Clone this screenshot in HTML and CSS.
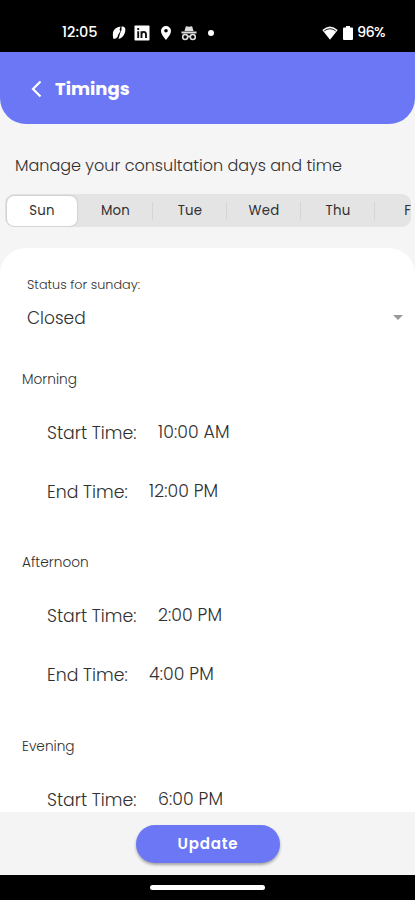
FILE: index.html
```html
<!DOCTYPE html>
<html lang="en">
<head>
<meta charset="utf-8">
<title>Timings</title>
<link rel="stylesheet" href="styles.css">
</head>
<body>
<div class="screen">
  <div class="status">
    <span class="clock">12:05</span>
    <svg class="leaf" width="14" height="16" viewBox="0 0 14 16"><path d="M1.500 14C-.5 7 2 2.500 8.500 1.500L7.500 5 8.500 6 6 10 5.500 12Q4 14 1.500 14ZM6.500 14 8 8.500 9.500 5 9.500 1.500C13.500 1 14 4 12.800 8C11.500 11.500 9.500 13 6.500 14Z" fill="#fff"/></svg>
    <svg class="linkedin" width="16" height="16" viewBox="0 0 16 16"><rect x=".5" y=".5" width="15" height="15" rx=".8" fill="#fff"/><path d="M4.200 6.200V13M4.200 3V5M7.500 13V6.200M7.500 9.500C7.500 6 12 6 12 9.500V13" fill="none" stroke="#111" stroke-width="1.900"/></svg>
    <svg class="pin" width="12" height="16" viewBox="0 0 12 16"><path fill-rule="evenodd" d="M6 1A5 5 0 0 0 1 6C1 9.500 6 15 6 15S11 9.500 11 6A5 5 0 0 0 6 1ZM6 4A1.800 1.800 0 1 1 6 7.600A1.800 1.800 0 0 1 6 4Z" fill="#fff"/></svg>
    <svg class="incognito" width="16" height="16" viewBox="0 0 16 16"><path d="M3.500 6 4.800 1.500Q5.200.8 8 1.700Q10.800.8 11.200 1.500L12.500 6ZM.5 6.500H15.500V8.500H.5Z" fill="#ddd"/><g fill="none" stroke="#ddd" stroke-width="1.600"><circle cx="4.200" cy="12" r="2.500"/><circle cx="11.800" cy="12" r="2.500"/><path d="M6.700 12Q8 10.500 9.300 12"/></g></svg>
    <span class="dot"></span>
    <svg class="wifi" width="16" height="14" viewBox="0 0 16 14"><path d="M.3 4Q8-3 15.700 4L8 13.700Z" fill="#fff"/><path d="M2.200 4.900Q8 .6 13.800 4.900" fill="none" stroke="#000" stroke-width=".9"/></svg>
    <svg class="battery" width="10" height="14" viewBox="0 0 10 14"><path d="M3 0H7V1.500H9Q10 1.500 10 2.500V13Q10 14 9 14H1Q0 14 0 13V2.500Q0 1.500 1 1.500H3Z" fill="#fff"/></svg>
    <span class="percent">96%</span>
  </div>
  <header class="header">
    <svg class="back" width="12" height="18" viewBox="0 0 12 18"><path d="M10.500 1.500 3 9 10.500 16.500" fill="none" stroke="#fff" stroke-width="2.200"/></svg>
    <h1 class="title">Timings</h1>
  </header>
  <p class="intro">Manage your consultation days and time</p>
  <nav class="tabs">
    <span class="tab active">Sun</span><span class="tab">Mon</span><span class="tab">Tue</span><span class="tab">Wed</span><span class="tab">Thu</span><span class="tab">Fri</span>
  </nav>
  <main class="card">
    <div class="label">Status for sunday:</div>
    <div class="select"><span class="value">Closed</span><svg width="10" height="5" viewBox="0 0 10 5"><path d="M0 0H10L5 5Z" fill="#999"/></svg></div>
    <section class="period">
      <h2 class="name">Morning</h2>
      <div class="row"><span class="start">Start Time:</span><span class="time">10:00 AM</span></div>
      <div class="row"><span class="end">End Time:</span><span class="time">12:00 PM</span></div>
    </section>
    <section class="period">
      <h2 class="name">Afternoon</h2>
      <div class="row"><span class="start">Start Time:</span><span class="time">2:00 PM</span></div>
      <div class="row"><span class="end">End Time:</span><span class="time">4:00 PM</span></div>
    </section>
    <section class="period">
      <h2 class="name">Evening</h2>
      <div class="row"><span class="start">Start Time:</span><span class="time">6:00 PM</span></div>
    </section>
  </main>
  <footer class="footer"><button class="update">Update</button></footer>
  <div class="navbar"><span class="handle"></span></div>
</div>
</body>
</html>
```
FILE: styles.css
```css
* { box-sizing: border-box; }
body { margin: 0; font-family: Poppins, Inter, sans-serif; }
.screen { width: 415px; height: 900px; display: flex; flex-direction: column; background: #f5f5f5; overflow: hidden; color: #303030; }
.screen > * { flex-shrink: 0; }
.status { height: 52px; padding: 13px 29px 0 62px; background: #000; color: #fff; display: flex; align-items: center; }
.clock { width: 50px; font-size: 14.500px; font-weight: 500; }
.linkedin { margin-left: 8px; }
.pin { margin-left: 10px; }
.incognito { margin-left: 9px; }
.dot { width: 6px; height: 6px; border-radius: 50%; background: #fff; margin-left: 11px; }
.wifi { margin-left: auto; }
.battery { margin-left: 5px; }
.percent { width: 29px; margin-left: 4px; font-size: 14.500px; font-weight: 500; letter-spacing: -.7px; }
.header { height: 72px; padding: 2px 0 0 30px; border-radius: 0 0 26px 26px; background: #6c77f6; color: #fff; display: flex; align-items: center; }
.title { margin: 0 0 0 13px; font-size: 18px; font-weight: 700; line-height: 28px; }
.intro { margin: 30px 0 0 15px; font-size: 16px; font-weight: 300; line-height: 24px; height: 24px; white-space: nowrap; }
.tabs { margin: 16px 4px 0 5px; height: 33px; border-radius: 9px; background: #e4e4e4; display: flex; overflow: hidden; }
.tab { width: 74px; flex: none; font-size: 13.300px; line-height: 34px; text-align: center; letter-spacing: .2px; background: linear-gradient(#d5d5d5, #d5d5d5) right center / 1px 18px no-repeat; }
.tab.active { width: 70px; height: 30px; margin: 2px 1px 0 2px; background: #fff; border-radius: 7px; line-height: 30px; box-shadow: 0 0 2px #0004; }
.tab:nth-child(2) { width: 75px; }
.card { height: 564px; margin-top: 21px; padding-top: 27px; background: #fff; border-radius: 26px 26px 0 0; overflow: hidden; }
.label { margin-left: 27px; height: 20px; line-height: 20px; font-size: 12.800px; font-weight: 300; }
.select { height: 24px; margin: 10px 12px 41px 27px; display: flex; align-items: center; justify-content: space-between; }
.value { margin-top: 2px; font-size: 17px; font-weight: 300; }
.period { height: 183.300px; }
.name { margin: 0 0 0 22px; font-size: 13.700px; font-weight: 300; line-height: 20px; }
.row { margin: 30px 0 0 47px; height: 24px; line-height: 24px; display: flex; font-size: 17.300px; font-weight: 300; }
.row + .row { margin-top: 35px; }
.start { width: 111px; }
.end { width: 102px; }
.time { letter-spacing: .1px; }
.start, .end { padding-top: 1px; }
.time { margin-top: 0; }
.footer { height: 63px; padding-top: 13px; display: flex; justify-content: center; background: #f4f4f4; }
.update { width: 144px; height: 38px; margin-left: 1px; padding: 0; border: 0; border-radius: 19px; background: #6c77f6; color: #fff; font: 600 15px/38px Poppins, Inter, sans-serif; letter-spacing: .8px; box-shadow: 0 2px 3px #0005; }
.navbar { height: 25px; background: #000; display: flex; justify-content: center; padding-top: 10px; }
.handle { width: 115px; height: 5px; border-radius: 3px; background: #fff; }
```
